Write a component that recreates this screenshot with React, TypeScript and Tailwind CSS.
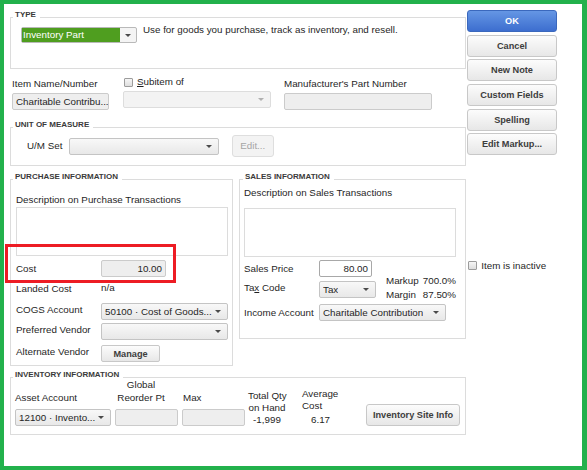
import type { ReactNode } from 'react'

const Arrow = ({ dim }: { dim?: boolean }) => (
  <span
    className={`h-0 w-0 shrink-0 border-x-[3px] border-t-[3.5px] border-x-transparent ${dim ? 'border-t-[#b0b0b0]' : 'border-t-[#4a4a4a]'}`}
  />
)

function Select({ value = '', className = '', dim }: { value?: string; className?: string; dim?: boolean }) {
  return (
    <div
      className={`flex h-[17px] items-center justify-between rounded-[2px] border pl-[3px] pr-[6px] ${
        dim ? 'border-[#dddddd] bg-[#f3f3f3]' : 'border-[#c4c4c4] bg-linear-to-b from-[#f8f8f8] to-[#e8e8e8]'
      } ${className}`}
    >
      <span className="overflow-hidden whitespace-nowrap">{value}</span>
      <Arrow dim={dim} />
    </div>
  )
}

function Field({ value = '', className = '', right, white }: { value?: string; className?: string; right?: boolean; white?: boolean }) {
  return (
    <div
      className={`h-[17px] overflow-hidden whitespace-nowrap rounded-[2px] border px-[3px] leading-[15px] ${
        white ? 'border-[#a8a8a8] bg-white' : 'border-[#cbcbcb] bg-[#eeeeee]'
      } ${right ? 'text-right' : ''} ${className}`}
    >
      {value}
    </div>
  )
}

const Check = () => (
  <span className="block h-[9px] w-[9px] shrink-0 rounded-[1px] border border-[#9c9c9c] bg-linear-to-b from-[#f6f6f6] to-[#dedede]" />
)

function Box({ label, labelLeft = 'left-[2px]', className = '', children }: { label: string; labelLeft?: string; className?: string; children?: ReactNode }) {
  return (
    <div className={`relative border border-[#dcdcdc] ${className}`}>
      <span className={`absolute top-[-7px] ${labelLeft} bg-white pl-[2px] pr-[4px] text-[8px] font-bold leading-[8px] text-[#3a3a3a]`}>
        {label}
      </span>
      {children}
    </div>
  )
}

function Row({ label, lw, mt, lift, children }: { label: ReactNode; lw: string; mt: string; lift?: boolean; children?: ReactNode }) {
  return (
    <div className={`flex h-[17px] items-center ${mt}`}>
      <span className={`shrink-0 ${lw} ${lift ? 'pb-[3px]' : ''}`}>{label}</span>
      {children}
    </div>
  )
}

const BTN =
  'flex h-[22px] w-[90px] items-center justify-center rounded-[3px] border text-[9.2px] font-bold'
const GRAY = 'border-[#c8c8c8] bg-linear-to-b from-[#fcfcfc] to-[#e7e7e7] text-[#3d3d3d]'

export default function App() {
  return (
    <div className="relative h-[470px] w-[587px] border-t-4 border-r-[5px] border-b-4 border-l-4 border-[#22b14c] bg-white font-['Liberation_Sans',Arial,sans-serif] text-[9.8px] leading-[12px] text-[#1f1f1f]">
      <div className="flex items-start pl-[6px]">
        {/* left column */}
        <div className="w-[456px] pt-[13px]">
          <Box label="TYPE" className="h-[52px] pl-[10px] pt-[9px]">
            <div className="flex items-start">
              <div className="flex h-[16px] w-[116px] rounded-[2px] border border-[#b9b9b9] bg-[#f4f4f4]">
                <div className="flex flex-1 items-center bg-[#4f9e1f] pl-[1px] text-white">Inventory Part</div>
                <div className="flex w-[16px] items-center justify-center">
                  <Arrow />
                </div>
              </div>
              <p className="ml-[6px] -mt-[3.4px]">Use for goods you purchase, track as inventory, and resell.</p>
            </div>
          </Box>

          <div className="mt-[9px] flex">
            <div className="ml-[2px] w-[97px]">
              <div>Item Name/Number</div>
              <Field className="mt-[3px]" value="Charitable Contribu..." />
            </div>
            <div className="ml-[14px] w-[148px]">
              <div className="-mt-[2px] mb-[2px] flex h-[12px] items-center">
                <span className="ml-[1px]"><Check /></span>
                <span className="ml-[4px]"><u>S</u>ubitem of</span>
              </div>
              <Select dim className="mt-[3px]" />
            </div>
            <div className="ml-[13px] w-[148px]">
              <div>Manufacturer's Part Number</div>
              <Field className="mt-[3px]" />
            </div>
          </div>

          <Box label="UNIT OF MEASURE" className="mt-[17px] h-[39px] pl-[16px] pt-[7px]">
            <div className="flex h-[22px] items-center">
              <span className="w-[42px]">U/M Set</span>
              <Select className="w-[150px]" />
              <div className="ml-[12.5px] flex h-[22px] w-[42.5px] items-center justify-center rounded-[3px] border border-[#dedede] bg-[#f3f3f3] text-[#a5a5a5]">
                Edit...
              </div>
            </div>
          </Box>

          <div className="mt-[13px] flex items-start">
            <Box label="PURCHASE INFORMATION" className="h-[187px] w-[223px] pl-[5px] pt-[14px]">
              <div>Description on Purchase Transactions</div>
              <div className="mt-[1px] h-[49px] w-[212px] border border-[#dcdcdc] bg-white" />
              <Row label="Cost" lw="w-[85px]" mt="mt-[4px]">
                <Field className="w-[65px]" value="10.00" right />
              </Row>
              <Row label="Landed Cost" lw="w-[85px]" mt="mt-[3px]">
                <span className="pb-[2px]">n/a</span>
              </Row>
              <Row label="COGS Account" lw="w-[85px]" mt="mt-[6px]" lift>
                <Select className="w-[127px]" value="50100 · Cost of Goods..." />
              </Row>
              <Row label="Preferred Vendor" lw="w-[85px]" mt="mt-[3px]" lift>
                <Select className="w-[127px]" />
              </Row>
              <Row label="Alternate Vendor" lw="w-[85px]" mt="mt-[5px]" lift>
                <div className={`flex h-[17px] w-[59px] items-center justify-center rounded-[2px] border text-[9.2px] font-bold ${GRAY}`}>
                  Manage
                </div>
              </Row>
            </Box>

            <Box label="SALES INFORMATION" labelLeft="left-[3px]" className="ml-[6px] h-[160px] w-[227px] pl-[4px] pt-[7px]">
              <div>Description on Sales Transactions</div>
              <div className="mt-[8.5px] h-[49px] w-[212px] border border-[#dcdcdc] bg-white" />
              <Row label="Sales Price" lw="w-[75px]" mt="mt-[3.5px]">
                <Field className="w-[53px]" value="80.00" right white />
              </Row>
              <Row label={<>Ta<u>x</u> Code</>} lw="w-[75px]" mt="mt-[4px]" lift>
                <Select className="w-[57px]" value="Tax" />
                <div className="ml-[10px] -mt-[7px] -mb-[20px] w-[70px] self-start leading-[14px]">
                  <div className="flex justify-between"><span>Markup</span><span>700.0%</span></div>
                  <div className="flex justify-between"><span>Margin</span><span>87.50%</span></div>
                </div>
              </Row>
              <Row label="Income Account" lw="w-[75px]" mt="mt-[6px]">
                <Select className="w-[127px]" value="Charitable Contribution" />
              </Row>
            </Box>
          </div>

          <Box label="INVENTORY INFORMATION" className="mt-[11px] flex h-[58px] items-end pb-[8px] pl-[4px]">
            <div className="flex items-end">
              <div className="w-[96px]">
                <div>Asset Account</div>
                <Select className="mt-[5px]" value="12100 · Invento..." />
              </div>
              <div className="ml-[4px] w-[63px]">
                <div className="ml-[2px] w-[48px] whitespace-nowrap text-center leading-[12.5px]">
                  Global
                  <br />
                  Reorder Pt
                </div>
                <Field className="mt-[5px]" />
              </div>
              <div className="ml-[4px] w-[63px]">
                <div className="pl-[1px]">Max</div>
                <Field className="mt-[5px]" />
              </div>
              <div className="ml-[3px] w-[38px] whitespace-nowrap text-center">
                Total Qty
                <br />
                on Hand
                <br />
                -1,999
              </div>
              <div className="ml-[16px] w-[40px] whitespace-nowrap">
                <div>Average</div>
                <div>Cost</div>
                <div className="mt-[2px] pl-[9px]">6.17</div>
              </div>
              <div className={`ml-[24px] flex h-[22px] w-[94px] items-center justify-center rounded-[3px] border text-[9.2px] font-bold ${GRAY}`}>
                Inventory Site Info
              </div>
            </div>
          </Box>
        </div>

        {/* right column */}
        <div className="ml-[1px] w-[90px] pt-[6px]">
          <div className="flex flex-col gap-[2.66px]">
            <div className={`${BTN} border-[#3a68bd] bg-linear-to-b from-[#6596e4] to-[#3d6ecf] text-white`}>OK</div>
            <div className={`${BTN} ${GRAY}`}>Cancel</div>
            <div className={`${BTN} ${GRAY}`}>New Note</div>
            <div className={`${BTN} ${GRAY}`}>Custom Fields</div>
            <div className={`${BTN} ${GRAY}`}>Spelling</div>
            <div className={`${BTN} ${GRAY}`}>Edit Markup...</div>
          </div>
          <div className="mt-[104.7px] flex h-[12px] items-center">
            <span className="ml-[1.3px]"><Check /></span>
            <span className="ml-[4px] whitespace-nowrap">Item is inactive</span>
          </div>
        </div>
      </div>

      {/* highlight annotation */}
      <div className="absolute left-[1px] top-[240px] h-[39px] w-[171px] border-[3px] border-[#ed1c24]" />
    </div>
  )
}
